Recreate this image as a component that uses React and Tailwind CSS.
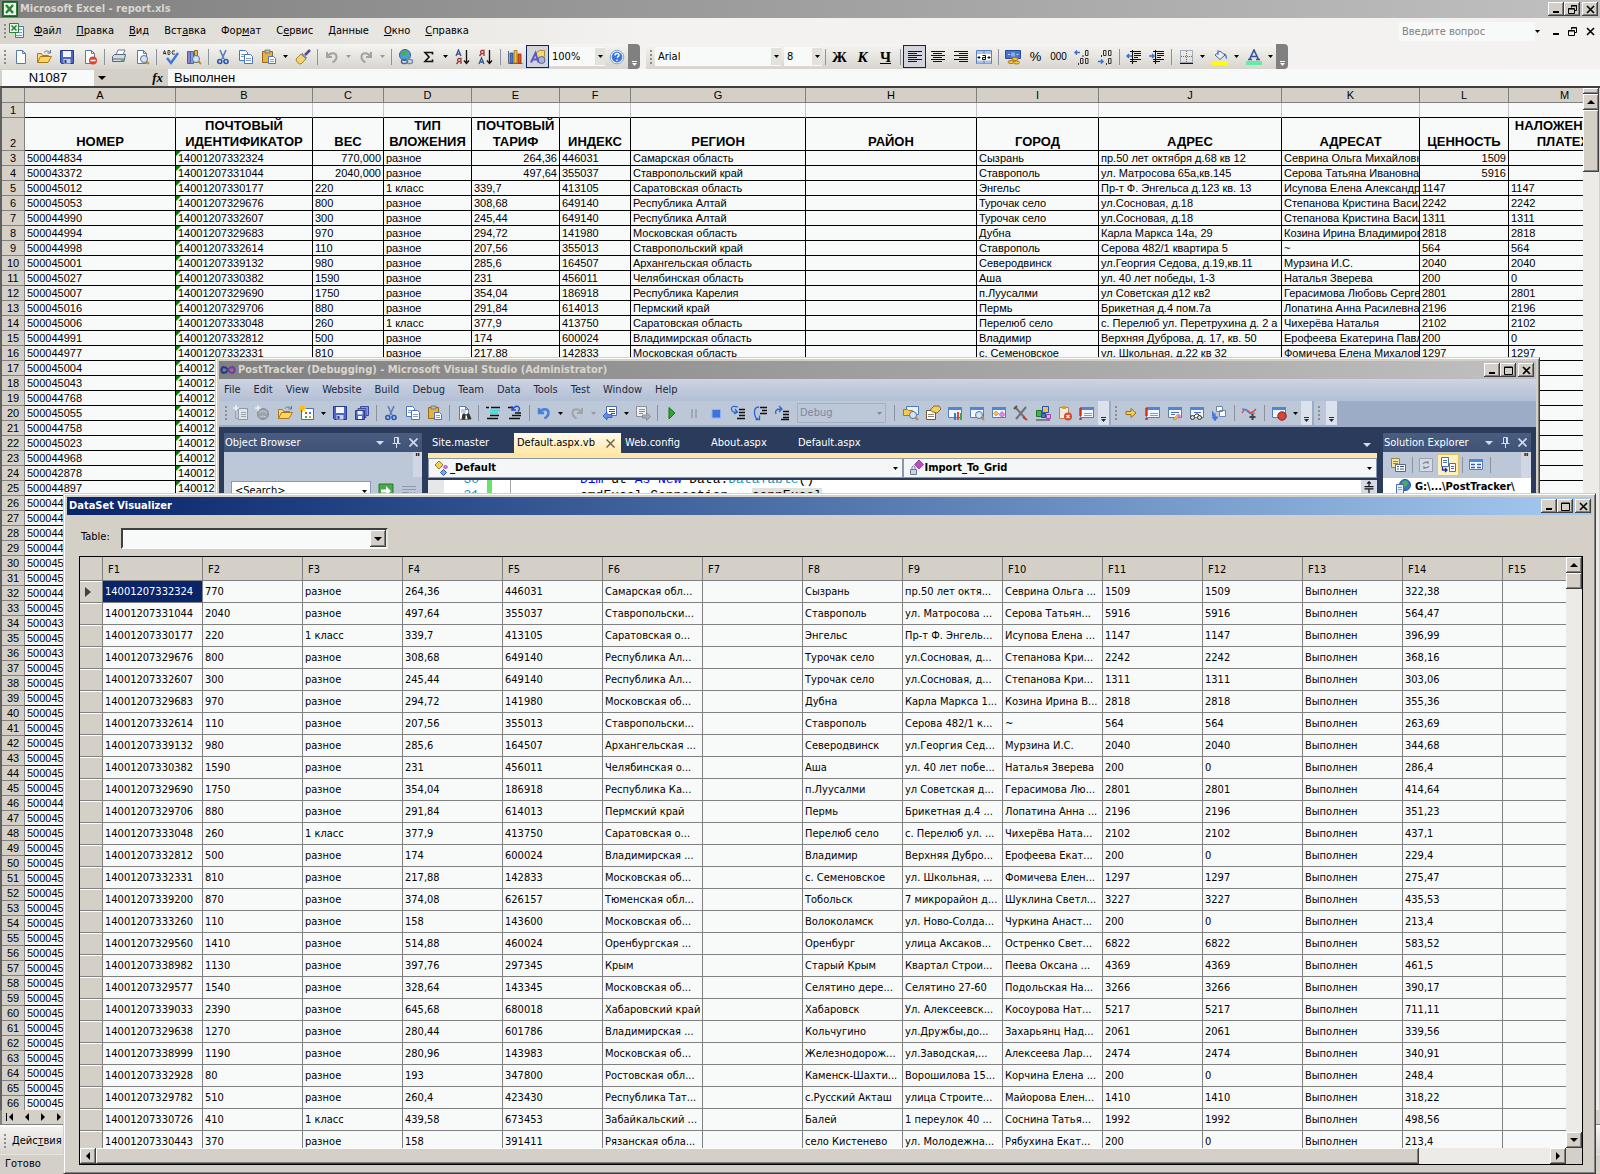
import React from 'react';

const raised =
  'bg-[#d4d0c8] shadow-[inset_-1px_-1px_0_#404040,inset_1px_1px_0_#ffffff,inset_-2px_-2px_0_#808080]';
const track = 'bg-[#ecebe8]';

/* ---------- icons ---------- */

const page = (
  <path d="M3.5 1.5h6l3 3v10h-9z M9.5 1.5v3h3" fill="#fff" stroke="#5a7aa8" />
);
const lens = (
  <>
    <path d="M12 12l3 3" stroke="#c88a2a" strokeWidth="2" />
    <circle cx="10" cy="10" r="3.5" fill="#cfe6fa" stroke="#5d7590" />
  </>
);
const win = (
  <>
    <path d="M1.5 2.5h13v10h-13z" fill="#f4f8ff" stroke="#5b7bb8" />
    <path d="M1 2h14v3H1z" fill="#4f86dc" />
  </>
);
const undoArrow = 'M3 3v5h5 M3.5 7.5C6 3.5 12 3 12.5 7.5C12.7 10 11 12 8.5 13.5';
const redoArrow = 'M13 3v5H8 M12.5 7.5C10 3.5 4 3 3.5 7.5C3.3 10 5 12 7.5 13.5';

const icons = {
  excel: (
    <>
      <path d="M.5.5h15v15H.5z" fill="#2f7d32" stroke="#1d5a22" />
      <path d="M2 2h12v12H2z" fill="#e9f6e7" />
      <path d="M4 4l7 8 M11 4l-7 8" stroke="#2c8136" strokeWidth="2.5" />
    </>
  ),
  book: (
    <>
      <path d="M6.5 3.5h8v11h-8z" fill="#eaf1fc" stroke="#4a73b6" />
      <path d="M9 6.5h4 M9 9.5h4 M7 12.5h6" stroke="#7596cd" />
      <path d="M.5.5h9v9h-9z" fill="#e9f6e7" stroke="#2c8136" />
      <path d="M2.5 2.5l5 5 M7.5 2.5l-5 5" stroke="#2c8136" strokeWidth="1.6" />
    </>
  ),
  new: page,
  open: (
    <>
      <path d="M1.5 13.5v-9h4l1 2h6v3" fill="#f7dc83" stroke="#a9781e" />
      <path d="M1.5 13.5l3-6h11l-3.5 6z" fill="#ffd65c" stroke="#a9781e" />
      <path d="M8 3.5c2-2 4-2 6 0 M14.5 1v3h-3" stroke="#56749f" />
    </>
  ),
  save: (
    <>
      <path d="M1.5 1.5h13v13h-12l-1-1z" fill="#4d66c8" stroke="#283a8e" />
      <path d="M4 2h8v6H4z" fill="#f3f6ff" />
      <path d="M4.5 10h7v4.5h-7z" fill="#c9d2ea" />
      <path d="M5.5 11h2v3h-2z" fill="#2d3f93" />
    </>
  ),
  saveAll: (
    <>
      <path d="M6.5 1.5h8v9h-8z" fill="#8b9be0" stroke="#3a4aa0" />
      <path d="M4 3.5h8v9H4z" fill="#8b9be0" stroke="#3a4aa0" />
      <path d="M1.5 5.5h9v9h-9z" fill="#5167c6" stroke="#2b3b8e" />
      <path d="M3.5 6h5v3.5h-5z M4 11h4v3H4z" fill="#f1f4ff" />
    </>
  ),
  permission: (
    <>
      {page}
      <circle cx="11" cy="11.5" r="4" fill="#e2452a" />
      <path d="M8.5 11.5h5" stroke="#fff" strokeWidth="1.6" />
    </>
  ),
  print: (
    <>
      <path d="M5 6l2-5h7l-2 5z" fill="#fff" stroke="#6a7c96" />
      <path d="M1.5 7.5l2-2h11l-1.5 7h-11.5z" fill="#d5dbe4" stroke="#5d6672" />
      <path d="M2 10h11" stroke="#5d6672" />
      <path d="M10 11h2.5v2H10z" fill="#29b53a" />
    </>
  ),
  preview: (
    <>
      {page}
      {lens}
    </>
  ),
  spell: (
    <>
      <path d="M0 5.5l1.5-4l1.5 4 M1 4.5h2 M5 1.5v4h1.5q1.5-1 0-2q1-1.2 0-2z M12 2q-3-1-3 1.5t3 1.5" stroke="#222" strokeWidth=".9" />
      <path d="M4 9l4 5l7-10" stroke="#3f76d8" strokeWidth="2.4" />
    </>
  ),
  research: (
    <>
      <path d="M1.5 2.5h3v12h-3z" fill="#9a7cc8" stroke="#65509a" />
      <path d="M4.5 2.5h3v12h-3z" fill="#7ea3e0" stroke="#4668a8" />
      <path d="M8.5 1.5h3v12h-3z" fill="#e6b566" stroke="#8e6a2a" />
      {lens}
    </>
  ),
  cut: (
    <>
      <path d="M5 1l4 9 M11 1l-4 9" stroke="#5b7fb8" strokeWidth="1.6" />
      <circle cx="4.8" cy="12.5" r="2" stroke="#2c54b4" strokeWidth="1.6" />
      <circle cx="11" cy="12.5" r="2" stroke="#2c54b4" strokeWidth="1.6" />
    </>
  ),
  copy: (
    <>
      <path d="M1.5 1.5h6l2 2v8h-8z" fill="#fff" stroke="#4c74bc" />
      <path d="M6.5 5.5h6l2 2v7h-8z" fill="#fff" stroke="#4c74bc" />
      <path d="M3 5.5h3 M3 7.5h3 M8 9.5h5 M8 11.5h5" stroke="#7a9bd8" />
    </>
  ),
  paste: (
    <>
      <path d="M1.5 2.5h10v11h-10z" fill="#e9b03e" stroke="#94691d" />
      <path d="M4 1h5v3H4z" fill="#b9b9b9" stroke="#6f6f6f" strokeWidth=".8" />
      <path d="M7.5 7.5h5l2 2v5h-7z" fill="#fff" stroke="#4c74bc" />
      <path d="M9 10.5h4 M9 12.5h4" stroke="#7a9bd8" />
    </>
  ),
  brush: (
    <>
      <path d="M15 1l-5 5" stroke="#5c4a8a" strokeWidth="2.5" />
      <path d="M6 5l5 5l-5 5q-4 0-5-5z" fill="#f2d375" stroke="#a8862f" />
      <path d="M6.5 4.5l5 5" stroke="#7d8cb8" strokeWidth="2" />
    </>
  ),
  undoGray: <path d={undoArrow} stroke="#a3a3a3" strokeWidth="2" />,
  redoGray: <path d={redoArrow} stroke="#a3a3a3" strokeWidth="2" />,
  undoBlue: <path d={undoArrow} stroke="#4a7fd8" strokeWidth="2.4" />,
  link: (
    <>
      <circle cx="7" cy="6" r="5.5" fill="#4f9be0" stroke="#2d61a0" />
      <path d="M3 4q3-4 6-2q1 3-2 4q-4 2-4-2z M9 8l3-1l-2 4z" fill="#46b04a" />
      <rect x="3.5" y="10.5" width="6" height="4" rx="2" stroke="#4a6591" strokeWidth="1.5" />
      <rect x="8.5" y="10.5" width="6" height="4" rx="2" stroke="#6f8cb8" strokeWidth="1.5" />
    </>
  ),
  sum: <path d="M11.5 5.5V3.500H4L8 8L4 12.500h7.500v-2" stroke="#111" strokeWidth="1.6" />,
  sortAz: (
    <>
      <path d="M1 7l2.5-6L6 7 M2 5h3" stroke="#34549c" strokeWidth="1.3" />
      <path d="M6 15V9.5H3.5q-2 1.5 0 3H6 M3.5 12.5L1.5 15" stroke="#a03838" strokeWidth="1.3" />
      <path d="M11.5 1v13 M9 11.5l2.5 3l2.5-3" stroke="#111" strokeWidth="1.3" />
    </>
  ),
  sortZa: (
    <>
      <path d="M6 7V1.5H3.5q-2 1.5 0 3H6 M3.5 4.5L1.5 7" stroke="#a03838" strokeWidth="1.3" />
      <path d="M1 15l2.5-6L6 15 M2 13h3" stroke="#34549c" strokeWidth="1.3" />
      <path d="M11.5 1v13 M9 11.5l2.5 3l2.5-3" stroke="#111" strokeWidth="1.3" />
    </>
  ),
  chart: (
    <>
      <path d="M1.5 2v12.5h14" stroke="#666" />
      <path d="M3 4h3v10H3z" fill="#4c78d0" stroke="#274a94" strokeWidth=".8" />
      <path d="M7 1.5h3V14H7z" fill="#f2c23c" stroke="#94701a" strokeWidth=".8" />
      <path d="M11 5h3v9h-3z" fill="#e0552c" stroke="#8d2c12" strokeWidth=".8" />
    </>
  ),
  drawing: (
    <>
      <path d="M6.5 3.5l3-2h5v6l-3 2h-5z" fill="#f5d978" stroke="#a98a30" />
      <circle cx="11.5" cy="11" r="3.5" fill="#a8b4d2" stroke="#56658c" />
      <path d="M1 13.5L5.5 4l3 9.5 M3 10.5h4.5" stroke="#5b5bc4" strokeWidth="2" />
    </>
  ),
  help: (
    <>
      <circle cx="8" cy="8" r="6.8" fill="#fff" stroke="#7da2dc" />
      <circle cx="8" cy="8" r="5.4" fill="#3b78da" />
      <path d="M6 6.5q0-2 2-2t2 1.8q0 1.2-2 2.2 M8 10.5v1.5" stroke="#fff" strokeWidth="1.4" />
    </>
  ),
  alignLeft: <path d="M1 2.5h14 M1 4.5h9 M1 6.5h14 M1 8.5h9 M1 10.5h14 M1 12.5h9" stroke="#111" />,
  alignCenter: <path d="M1 2.5h14 M3 4.5h9 M1 6.5h14 M3 8.5h9 M1 10.5h14 M3 12.5h9" stroke="#111" />,
  alignRight: <path d="M1 2.5h14 M6 4.5h9 M1 6.5h14 M6 8.5h9 M1 10.5h14 M6 12.5h9" stroke="#111" />,
  merge: (
    <>
      <path d="M.5 1.5h15v13H.5z" fill="#fff" stroke="#5d7fb8" />
      <path d="M1 2h14v3H1z M1 11.5h14v3H1z" fill="#a9c2ea" />
      <path d="M8 1.5v3 M8 11.5v3" stroke="#5d7fb8" />
      <path d="M1.5 8.5h3 M3 7v3 M11.5 8.5h3 M13 7v3 M6.5 6.5h3v4h-3v-2h3" stroke="#111" />
    </>
  ),
  currency: (
    <>
      <path d="M.5 1.5h15v8H.5z" fill="#4774cc" stroke="#2b4d96" />
      <path d="M3 5.5h2 M7 3.5v4 M9 3.5v4 M11.5 5.5h2" stroke="#cfe0ff" />
      <ellipse cx="10" cy="10" rx="3" ry="1.5" fill="#f7c93e" stroke="#a87a14" />
      <ellipse cx="6" cy="13" rx="3" ry="1.5" fill="#f7c93e" stroke="#a87a14" />
      <ellipse cx="11.5" cy="13.5" rx="3" ry="1.5" fill="#f7c93e" stroke="#a87a14" />
    </>
  ),
  incDec: (
    <>
      <path d="M6 3.5H1 M3 1.5l-2 2l2 2" stroke="#3a6fd8" strokeWidth="1.5" />
      <path d="M11.5 1.5h2.5v5h-2.5z M6.5 9.5h2.5v5H6.5z M11.5 9.5h2.5v5h-2.5z M9 6v2 M4.5 14v2" stroke="#333" />
    </>
  ),
  decDec: (
    <>
      <path d="M6.5 1.5h2.5v5H6.5z M11.5 1.5h2.5v5h-2.5z M11.5 9.5h2.5v5h-2.5z M4.5 6v2 M9.5 14v2" stroke="#333" />
      <path d="M1 12.5h5 M4 10.5l2 2l-2 2" stroke="#3a6fd8" strokeWidth="1.5" />
    </>
  ),
  outdent: (
    <>
      <path d="M4 2.5h11 M8 4.5h7 M8 6.5h7 M8 8.5h4 M4 10.5h11 M4 12.5h7 M6.5 1v14" stroke="#111" strokeWidth="1.1" />
      <path d="M6 7H1 M3 5L1 7l2 2" stroke="#3a6fd8" strokeWidth="1.5" />
    </>
  ),
  indent: (
    <>
      <path d="M4 2.5h11 M8 4.5h7 M8 6.5h7 M8 8.5h4 M4 10.5h11 M4 12.5h7 M6.5 1v14" stroke="#111" strokeWidth="1.1" />
      <path d="M0 7h5 M3 5l2 2l-2 2" stroke="#3a6fd8" strokeWidth="1.5" />
    </>
  ),
  border: (
    <>
      <path d="M2.5 1.5h12v12h-12z M8.5 2v11 M3 7.5h11" stroke="#5a6a90" strokeDasharray="1 1" />
      <path d="M2 14.5h13" stroke="#111" />
    </>
  ),
  fill: (
    <>
      <path d="M3 6l5-4l5 4l-5 4.5z" fill="#e8eef8" stroke="#4a6494" />
      <path d="M6 1v5" stroke="#4a6494" />
      <path d="M12 4q3 1 3 6q-2-1-2-4z" fill="#3a6fd0" />
      <path d="M0 12h16v4H0z" fill="#ffff00" />
    </>
  ),
  fontColor: (
    <>
      <path d="M3.5 10.5L8 1l4.5 9.5 M5 7.5h6 M2 10.5h4 M10 10.5h4" stroke="#34549c" strokeWidth="1.6" />
      <path d="M0 12h16v4H0z" fill="#5cf0a0" />
    </>
  ),
  infinity: (
    <>
      <path d="M8 8C6 4.5 1.5 4 1.5 8S6 11.5 8 8" stroke="#24398c" strokeWidth="2.2" />
      <path d="M8 8c2-3.5 6.5-4 6.5 0S10 11.5 8 8" stroke="#7a3aa8" strokeWidth="2.2" />
    </>
  ),
  grayWin: (
    <>
      <path d="M5.5 3.5h9v11h-9z" fill="#dfe3ea" stroke="#8f96a4" />
      <path d="M2.5 5.5h3v8h-3z M8 7.5h5 M8 9.5h5 M8 11.5h5" stroke="#9aa1ae" />
      <path d="M3 0v6 M0 3h6" stroke="#fff" />
    </>
  ),
  grayGlobe: (
    <>
      <circle cx="8" cy="9" r="5.5" fill="#9ea4ae" stroke="#868c98" />
      <path d="M4 8q4-4 8 0 M5 12q3-2 6 0" stroke="#c4c8d0" />
      <path d="M3 0v6 M0 3h6" stroke="#fff" />
    </>
  ),
  newItem: (
    <>
      <path d="M2.5 3.5h12v11h-12z" fill="#fff" stroke="#4c6cb0" />
      <path d="M6 7h2v2H6z" fill="#e0452c" />
      <path d="M10 7h2v2h-2z" fill="#3a78d8" />
      <path d="M6 11h2v2H6z" fill="#3aa848" />
      <path d="M10 11h2v2h-2z" fill="#d8a020" />
      <path d="M3.5 0v7 M0 3.5h7 M1 1l5 5 M6 1L1 6" stroke="#f2b81c" />
    </>
  ),
  find: (
    <>
      {page}
      <path d="M5 5h5 M5 7h5" stroke="#7a9bd8" />
      <path d="M7 9h2v5H6z M11 9h2l2 5h-3z M9 10h2" fill="#333" stroke="#333" />
    </>
  ),
  comment: (
    <>
      <path d="M1 2.5h3 M6 2.5h9 M5 10.5h9 M2 13.5h11" stroke="#111" strokeWidth="1.4" />
      <path d="M5 5.5h10 M5 8h8" stroke="#27dede" strokeWidth="1.4" />
    </>
  ),
  uncomment: (
    <>
      <path d="M1 2.5h5 M5 10.5h9 M2 13.5h11 M8 8h6" stroke="#111" strokeWidth="1.4" />
      <path d="M5 1v4h4 M5.5 4.5Q8 .5 11 1.500q3 2 0 5" stroke="#2a4ad0" strokeWidth="1.4" />
    </>
  ),
  navBack: (
    <>
      <path d="M4.5 1.5h10v9h-10z" fill="#fff" stroke="#4c6cb0" />
      <path d="M7 4.5h6 M7 6.5h6 M9 8.5h4" stroke="#2a50b0" />
      <path d="M1 11l4-4v2.5h5v3H5V15z" fill="#5a92e8" stroke="#2a58b0" strokeWidth=".8" />
    </>
  ),
  navFwd: (
    <>
      <path d="M1.5 1.5h10v10h-10z" fill="#eceef2" stroke="#8a8f9a" />
      <path d="M4 4.5h6 M4 6.5h6 M4 8.5h4" stroke="#8a8f9a" />
      <path d="M15.5 11.5l-4-4V10h-4v3h4v2.5z" fill="#a8adb8" stroke="#7f8590" strokeWidth=".8" />
    </>
  ),
  play: <path d="M5 2.5l6 5.5l-6 6z" fill="#2ea52e" stroke="#17701c" />,
  pause: <path d="M5 4h2v9H5z M9 4h2v9H9z" fill="#a2a8b4" />,
  stop: <path d="M4 4.5h8.5V13H4z" fill="#3b74dc" stroke="#8fb3f2" />,
  stepInto: (
    <>
      <path d="M9 4.5h6 M9 7.5h6 M9 10.5h6 M7 13.5h8" stroke="#111" strokeWidth="1.3" />
      <path d="M8 2Q1 0 1.5 4t5.5 3 M5 4l2.5 3L4 9" stroke="#2d62d4" strokeWidth="1.3" />
    </>
  ),
  stepOver: (
    <>
      <path d="M8 2.5h7 M10 5.5h5 M8 8.5h7" stroke="#111" strokeWidth="1.3" />
      <path d="M7 2Q2 2 2.5 8t4 6 M3.5 14.5h4v-4" stroke="#2d62d4" strokeWidth="1.3" />
    </>
  ),
  stepOut: (
    <>
      <path d="M9 6.5h6 M9 9.5h6 M9 12.5h6 M7 14.5h8" stroke="#111" strokeWidth="1.3" />
      <path d="M2 9Q0 4 7 4 M5 1l3 3l-3 3" stroke="#2d62d4" strokeWidth="1.3" />
    </>
  ),
  folderFind: (
    <>
      <path d="M3.5 1.5h12v8h-12z" fill="#e9f1ff" stroke="#4f79c4" />
      <path d="M.5 4.5h4l1 1h4v5h-9z" fill="#f7c94a" stroke="#a5781c" />
      {lens}
    </>
  ),
  properties: (
    <>
      <path d="M1.5 5.5h9v9h-9z" fill="#fff" stroke="#6c5a3a" />
      <path d="M3 9.5h6 M3 11.5h6" stroke="#8f836a" />
      <path d="M5 5l4-4h5l2 3l-4 4l-4-1z" fill="#f2cf62" stroke="#8e6a1a" />
    </>
  ),
  toolboxWin: (
    <>
      {win}
      <path d="M7 8h2v7H7z" fill="#3a78d8" />
      <path d="M10 7h2v8h-2z" fill="#e0452c" />
      <path d="M13 8h2v7h-2z" fill="#3aa848" />
    </>
  ),
  winFind: (
    <>
      {win}
      {lens}
    </>
  ),
  diamondWin: (
    <>
      {win}
      <path d="M5 6l2.5 2.5L5 11L2.5 8.5z" fill="#f5c838" stroke="#a8801c" strokeWidth=".6" />
      <path d="M11 6.5l3 3l-3 3l-3-3z" fill="#e08ae8" stroke="#9a3aa8" strokeWidth=".6" />
    </>
  ),
  tools: (
    <>
      <path d="M2 2l10 11" stroke="#8a6a5a" strokeWidth="2" />
      <path d="M13 2L3 14" stroke="#6a7080" strokeWidth="2" />
      <path d="M10 12l4 3" stroke="#c0392b" strokeWidth="2" />
      <path d="M1 4l3-3" stroke="#555" strokeWidth="2" />
    </>
  ),
  blocks: (
    <>
      <path d="M1.5 5.5h5v6h-5z" fill="#49b04c" stroke="#23702a" />
      <path d="M7.5 1.5h6v6h-6z" fill="#f2c43c" stroke="#2c52ac" />
      <path d="M6.5 8.5h4v4h-4z" fill="#3a78d8" stroke="#1f4a94" />
      <path d="M11.5 9.5h4v4h-4z" fill="#e9a6ee" stroke="#9a4aa6" />
      <path d="M1 15h14" stroke="#666" strokeWidth="1.5" />
    </>
  ),
  clipError: (
    <>
      <path d="M2.5 2.5h9v11h-9z" fill="#f3eada" stroke="#a88a5a" />
      <path d="M5 1h4v3H5z" fill="#c9a14a" />
      <circle cx="11" cy="11.5" r="4" fill="#e2452a" />
      <path d="M9.5 10l3 3 M12.5 10l-3 3" stroke="#fff" strokeWidth="1.2" />
    </>
  ),
  errorWin: (
    <>
      {win}
      <path d="M5 8.5h8 M5 10.5h8" stroke="#8a9ab8" />
      <path d="M1.5 3v8 M1.5 13v2" stroke="#dc2a1a" strokeWidth="2.4" />
    </>
  ),
  arrowRight: <path d="M3 6.500h5v-3l5 4.500l-5 4.500v-3H3z" fill="#f7cf52" stroke="#94701c" />,
  editWin: (
    <>
      {win}
      <path d="M4 7.5h8 M4 9.5h4" stroke="#4c6cb0" />
      <path d="M6 14l5-5l2 2l-5 4z" fill="#f5c838" stroke="#a8801c" strokeWidth=".6" />
      <path d="M12 9l2 2l-2 3l-2-2z" fill="#d872e4" />
    </>
  ),
  findWin: (
    <>
      {win}
      <path d="M5 7.5h7" stroke="#4c6cb0" />
      <circle cx="3.5" cy="12.5" r="2" fill="#ddd" stroke="#333" />
      <circle cx="10.5" cy="12.5" r="2" fill="#ddd" stroke="#333" />
      <path d="M5 11l2-2h2l2 2" stroke="#333" />
    </>
  ),
  cascade: (
    <>
      <path d="M5.5 1.5h6v5h-6z M8.5 5.5h6v6h-6z" fill="#fff" stroke="#6a82ac" />
      <path d="M1.5 6v5h3 M4 8v8 M1 12l3 3.5l3-3.5z" fill="#3f78d8" stroke="#3f78d8" />
    </>
  ),
  wave: (
    <>
      <path d="M1 8q3-6 6-2t8-2" stroke="#d8413a" strokeWidth="1.3" />
      <path d="M1 4q4 0 6 3t7 1" stroke="#5b86d6" strokeWidth="1.3" />
      <path d="M11.5 9v6 M8.5 12h6" stroke="#444" strokeWidth="2" />
    </>
  ),
  breakpoint: (
    <>
      {win}
      <circle cx="11" cy="11" r="4.2" fill="#d4473a" stroke="#8e1f18" />
    </>
  ),
  classes: (
    <>
      <path d="M6 1l4 4l-4 4l-4-4z" fill="#f7cf52" stroke="#a5781c" />
      <path d="M12.5 5l2 2l-2 2l-2-2z" fill="#e58aea" stroke="#9a3aa8" />
      <path d="M10.5 9.5l3 3l-3 3l-3-3z" fill="#7fa8ea" stroke="#2c52ac" />
    </>
  ),
  method: (
    <>
      <path d="M11 0l4.5 4.5L11 9L6.5 4.5z" fill="#c04ac8" stroke="#8a2a94" strokeWidth=".8" />
      <path d="M2.5 9.5h6v5h-6z" fill="#c9d3e4" stroke="#67789a" />
      <path d="M4 9V7q1.5-2 3 0v2" stroke="#67789a" />
    </>
  ),
  go: (
    <>
      <path d="M1 1h14v14H1z" fill="#48a84a" stroke="#2c7a30" />
      <path d="M3 6.5h5V3l5 5l-5 5V9.5H3z" fill="#fff" />
    </>
  ),
  listGray: <path d="M1 3.5h14 M1 6.5h14 M1 9.5h7 M1 12.5h7 M10 9l4 4 M14 9l-4 4" stroke="#9098a8" />,
  folders: (
    <>
      <path d="M1.5 1.5h8v9h-8z" fill="#f4e6a8" stroke="#9a8240" />
      <path d="M3 4.5h5 M3 6.5h5" stroke="#8d8360" />
      <path d="M5.5 7.5h10v7h-10z" fill="#fff" stroke="#5a6684" />
      <path d="M7 9.5h2 M10 9.5h4 M7 12h2 M10 12h4" stroke="#3a4f80" />
    </>
  ),
  refresh: (
    <>
      <path d="M1.5 1.5h13v13h-13z" fill="#d6dae2" stroke="#9aa0ac" />
      <path d="M5 7q2-3 5-1V4 M11 9q-2 3-5 1v2" stroke="#7f8694" strokeWidth="1.3" />
    </>
  ),
  nest: (
    <>
      <path d="M1.5.5h7v9h-7z M9.5 6.5h6v8h-6z" fill="#fff" stroke="#4c6cb0" />
      <path d="M3 3.5h4 M3 5.5h4 M11 9.5h3 M11 11.5h3" stroke="#4c6cb0" />
      <path d="M2.5 10v3h4 M5 11l2 2l-2 2" stroke="#1a2a9a" strokeWidth="1.3" />
    </>
  ),
  form: (
    <>
      {win}
      <path d="M3 7.5h4 M9 7.5h4 M3 10.5h4 M9 10.5h4" stroke="#3a62b0" strokeWidth="1.4" />
    </>
  ),
  siteGlobe: (
    <>
      <circle cx="10" cy="6" r="5.5" fill="#3a78c8" stroke="#23508c" />
      <path d="M7 3q3-3 6 0q0 4-4 5z" fill="#48b04c" />
      <path d="M1.5 5.5h7v9h-7z" fill="#e6eefc" stroke="#4c6cb0" />
      <path d="M3 8.5h4 M3 10.5h4" stroke="#7a9bd8" />
    </>
  ),
};

const Icon = ({ name }) => (
  <svg viewBox="0 0 16 16" className="h-4 w-4 shrink-0" fill="none" aria-hidden="true">
    {icons[name]}
  </svg>
);

const Caret = ({ className = 'fill-black' }) => (
  <svg viewBox="0 0 5 3" className={`h-[3px] w-[5px] shrink-0 ${className}`} aria-hidden="true">
    <path d="M0 0h5L2.5 3z" />
  </svg>
);

const Triangle = ({ dir }) => {
  const paths = { up: 'M0 6l4-4l4 4z', down: 'M0 2l4 4l4-4z', left: 'M6 0L2 4l4 4z', right: 'M2 0l4 4l-4 4z' };
  return (
    <svg viewBox="0 0 8 8" className="h-2 w-2 shrink-0 fill-black" aria-hidden="true">
      <path d={paths[dir]} />
    </svg>
  );
};

/* ---------- shared window parts ---------- */

const glyphs = {
  Minimize: <path d="M1 7h6" strokeWidth="2" />,
  Maximize: <path d="M.5 1h8v7.5h-8z M.5 1.5h8" />,
  Restore: <path d="M3.5 2.5v-2h5v5h-2 M3 1h6 M.5 3.5h6v5h-6z M.5 4h6" />,
  Close: <path d="M1 1l7 7 M8 1L1 8" strokeWidth="1.6" />,
};

const CaptionButton = ({ label, flat }) => (
  <button
    type="button"
    aria-label={label}
    className={`flex h-[14px] w-4 items-center justify-center ${flat ? '' : raised}`}
  >
    <svg viewBox="0 0 9 9" className="h-[9px] w-[9px]" fill="none" stroke="#000" aria-hidden="true">
      {glyphs[label]}
    </svg>
  </button>
);

const ScrollButton = ({ dir }) => (
  <button type="button" aria-label={`Scroll ${dir}`} className={`flex h-4 w-4 shrink-0 items-center justify-center ${raised}`}>
    <Triangle dir={dir} />
  </button>
);

/* Toolbar rows are lists of icon names plus: '|' separator, 'v' drop arrow */
const ToolItems = ({ items, size, sep }) =>
  items.map((item, i) => {
    if (item === '|') {
      return (
        <span key={i} className={`flex shrink-0 justify-center ${sep}`}>
          <span className="h-4 w-px bg-[#8d92a0]" />
        </span>
      );
    }
    if (item === 'v' || item === 'V') {
      return (
        <button key={i} type="button" aria-label="More" className="flex w-[11px] shrink-0 items-center justify-center">
          <Caret className={item === 'V' ? 'fill-[#999999]' : 'fill-black'} />
        </button>
      );
    }
    const pressed = item.startsWith('*');
    const name = pressed ? item.slice(1) : item;
    return (
      <button
        key={i}
        type="button"
        aria-label={name}
        className={`flex shrink-0 items-center justify-center ${size} ${pressed ? 'border border-[#0a246a] bg-[#d3d5de]' : ''}`}
      >
        <Icon name={name} />
      </button>
    );
  });

const Grip = () => (
  <span className="flex w-[9px] shrink-0 flex-col items-center gap-[2px]">
    {[0, 1, 2, 3].map((n) => (
      <span key={n} className="h-[2px] w-[2px] bg-[#8c8c8c]" />
    ))}
  </span>
);

const ToolCombo = ({ label, value, className }) => (
  <span className={`flex h-[19px] shrink-0 items-center bg-[#f8fafa] ${className}`}>
    <select aria-label={label} className="h-full min-w-0 flex-1 appearance-none bg-transparent pl-[3px] outline-none">
      <option>{value}</option>
    </select>
    <span className="flex h-[17px] w-[10px] items-center justify-center bg-[#e4e2dd]">
      <Caret />
    </span>
  </span>
);

const Overflow = ({ className }) => (
  <button type="button" aria-label="Toolbar options" className={`flex shrink-0 flex-col items-center justify-end gap-px pb-[3px] ${className}`}>
    <span className="h-px w-[5px] bg-current" />
    <Caret className="fill-current" />
  </button>
);

/* ---------- data ---------- */

const sheetColumns = [
  ['A', 'w-[151px]', 'НОМЕР'],
  ['B', 'w-[137px]', 'ПОЧТОВЫЙ ИДЕНТИФИКАТОР'],
  ['C', 'w-[71px]', 'ВЕС'],
  ['D', 'w-[88px]', 'ТИП ВЛОЖЕНИЯ'],
  ['E', 'w-[88px]', 'ПОЧТОВЫЙ ТАРИФ'],
  ['F', 'w-[71px]', 'ИНДЕКС'],
  ['G', 'w-[175px]', 'РЕГИОН'],
  ['H', 'w-[171px]', 'РАЙОН'],
  ['I', 'w-[122px]', 'ГОРОД'],
  ['J', 'w-[183px]', 'АДРЕС'],
  ['K', 'w-[138px]', 'АДРЕСАТ'],
  ['L', 'w-[89px]', 'ЦЕННОСТЬ'],
  ['M', 'w-[112px]', 'НАЛОЖЕННЫЙ ПЛАТЕЖ'],
];

const sheetRows = [
  ['500044834', '14001207332324', '770,000', 'разное', '264,36', '446031', 'Самарская область', '', 'Сызрань', 'пр.50 лет октября д.68 кв 12', 'Севрина Ольга Михайловна', '1509', ''],
  ['500043372', '14001207331044', '2040,000', 'разное', '497,64', '355037', 'Ставропольский край', '', 'Ставрополь', 'ул. Матросова 65а,кв.145', 'Серова Татьяна Ивановна', '5916', ''],
  ['500045012', '14001207330177', '220', '1 класс', '339,7', '413105', 'Саратовская область', '', 'Энгельс', 'Пр-т Ф. Энгельса д.123 кв. 13', 'Исупова Елена Александровна', '1147', '1147'],
  ['500045053', '14001207329676', '800', 'разное', '308,68', '649140', 'Республика Алтай', '', 'Турочак село', 'ул.Сосновая, д.18', 'Степанова Кристина Васильевна', '2242', '2242'],
  ['500044990', '14001207332607', '300', 'разное', '245,44', '649140', 'Республика Алтай', '', 'Турочак село', 'ул.Сосновая, д.18', 'Степанова Кристина Васильевна', '1311', '1311'],
  ['500044994', '14001207329683', '970', 'разное', '294,72', '141980', 'Московская область', '', 'Дубна', 'Карла Маркса 14а, 29', 'Козина Ирина Владимировна', '2818', '2818'],
  ['500044998', '14001207332614', '110', 'разное', '207,56', '355013', 'Ставропольский край', '', 'Ставрополь', 'Серова 482/1 квартира 5', '~', '564', '564'],
  ['500045001', '14001207339132', '980', 'разное', '285,6', '164507', 'Архангельская область', '', 'Северодвинск', 'ул.Георгия Седова, д.19,кв.11', 'Мурзина И.С.', '2040', '2040'],
  ['500045027', '14001207330382', '1590', 'разное', '231', '456011', 'Челябинская область', '', 'Аша', 'ул. 40 лет победы, 1-3', 'Наталья Зверева', '200', '0'],
  ['500045007', '14001207329690', '1750', 'разное', '354,04', '186918', 'Республика Карелия', '', 'п.Луусалми', 'ул Советская д12 кв2', 'Герасимова Любовь Сергеевна', '2801', '2801'],
  ['500045016', '14001207329706', '880', 'разное', '291,84', '614013', 'Пермский край', '', 'Пермь', 'Брикетная д.4 пом.7а', 'Лопатина Анна Расилевна', '2196', '2196'],
  ['500045006', '14001207333048', '260', '1 класс', '377,9', '413750', 'Саратовская область', '', 'Перелюб село', 'с. Перелюб ул. Перетрухина д. 2 а кв', 'Чихерёва Наталья', '2102', '2102'],
  ['500044991', '14001207332812', '500', 'разное', '174', '600024', 'Владимирская область', '', 'Владимир', 'Верхняя Дуброва, д. 17, кв. 50', 'Ерофеева Екатерина Павловна', '200', '0'],
  ['500044977', '14001207332331', '810', 'разное', '217,88', '142833', 'Московская область', '', 'с. Семеновское', 'ул. Школьная, д.22 кв 32', 'Фомичева Елена Михаловна', '1297', '1297'],
  ['500045004', '14001207339200'],
  ['500045043', '14001207333260'],
  ['500044768', '14001207329560'],
  ['500045055', '14001207338982'],
  ['500044758', '14001207329577'],
  ['500045023', '14001207339033'],
  ['500044968', '14001207329638'],
  ['500042878', '14001207338999'],
  ['500044897', '14001207332928'],
];

// Rows 26-66 sit under the visualizer, only the start of the number shows
const shortNumbers = { 26: '500044', 27: '500044', 28: '500044', 29: '500044', 32: '500044', 34: '500043', 36: '500043', 46: '500044' };
for (let n = 26; n <= 66; n += 1) {
  sheetRows.push([shortNumbers[n] || '500045']);
}

const gridColumns = Array.from({ length: 15 }, (_, i) => `F${i + 1}`);

const gridRows = [
  ['14001207332324', '770', 'разное', '264,36', '446031', 'Самарская обл...', '', 'Сызрань', 'пр.50 лет октя...', 'Севрина Ольга ...', '1509', '1509', 'Выполнен', '322,38'],
  ['14001207331044', '2040', 'разное', '497,64', '355037', 'Ставропольски...', '', 'Ставрополь', 'ул. Матросова ...', 'Серова Татьян...', '5916', '5916', 'Выполнен', '564,47'],
  ['14001207330177', '220', '1 класс', '339,7', '413105', 'Саратовская о...', '', 'Энгельс', 'Пр-т Ф. Энгель...', 'Исупова Елена ...', '1147', '1147', 'Выполнен', '396,99'],
  ['14001207329676', '800', 'разное', '308,68', '649140', 'Республика Ал...', '', 'Турочак село', 'ул.Сосновая, д...', 'Степанова Кри...', '2242', '2242', 'Выполнен', '368,16'],
  ['14001207332607', '300', 'разное', '245,44', '649140', 'Республика Ал...', '', 'Турочак село', 'ул.Сосновая, д...', 'Степанова Кри...', '1311', '1311', 'Выполнен', '303,06'],
  ['14001207329683', '970', 'разное', '294,72', '141980', 'Московская об...', '', 'Дубна', 'Карла Маркса 1...', 'Козина Ирина В...', '2818', '2818', 'Выполнен', '355,36'],
  ['14001207332614', '110', 'разное', '207,56', '355013', 'Ставропольски...', '', 'Ставрополь', 'Серова 482/1 к...', '~', '564', '564', 'Выполнен', '263,69'],
  ['14001207339132', '980', 'разное', '285,6', '164507', 'Архангельская ...', '', 'Северодвинск', 'ул.Георгия Сед...', 'Мурзина И.С.', '2040', '2040', 'Выполнен', '344,68'],
  ['14001207330382', '1590', 'разное', '231', '456011', 'Челябинская о...', '', 'Аша', 'ул. 40 лет побе...', 'Наталья Зверева', '200', '0', 'Выполнен', '286,4'],
  ['14001207329690', '1750', 'разное', '354,04', '186918', 'Республика Ка...', '', 'п.Луусалми', 'ул Советская д...', 'Герасимова Лю...', '2801', '2801', 'Выполнен', '414,64'],
  ['14001207329706', '880', 'разное', '291,84', '614013', 'Пермский край', '', 'Пермь', 'Брикетная д.4 ...', 'Лопатина Анна ...', '2196', '2196', 'Выполнен', '351,23'],
  ['14001207333048', '260', '1 класс', '377,9', '413750', 'Саратовская о...', '', 'Перелюб село', 'с. Перелюб ул. ...', 'Чихерёва Ната...', '2102', '2102', 'Выполнен', '437,1'],
  ['14001207332812', '500', 'разное', '174', '600024', 'Владимирская ...', '', 'Владимир', 'Верхняя Дубро...', 'Ерофеева Екат...', '200', '0', 'Выполнен', '229,4'],
  ['14001207332331', '810', 'разное', '217,88', '142833', 'Московская об...', '', 'с. Семеновское', 'ул. Школьная, ...', 'Фомичева Елен...', '1297', '1297', 'Выполнен', '275,47'],
  ['14001207339200', '870', 'разное', '374,08', '626157', 'Тюменская обл...', '', 'Тобольск', '7 микрорайон д...', 'Шуклина Светл...', '3227', '3227', 'Выполнен', '435,53'],
  ['14001207333260', '110', 'разное', '158', '143600', 'Московская об...', '', 'Волоколамск', 'ул. Ново-Солда...', 'Чуркина Анаст...', '200', '0', 'Выполнен', '213,4'],
  ['14001207329560', '1410', 'разное', '514,88', '460024', 'Оренбургская ...', '', 'Оренбург', 'улица Аксаков...', 'Остренко Свет...', '6822', '6822', 'Выполнен', '583,52'],
  ['14001207338982', '1130', 'разное', '397,76', '297345', 'Крым', '', 'Старый Крым', 'Квартал Строи...', 'Пеева Оксана ...', '4369', '4369', 'Выполнен', '461,5'],
  ['14001207329577', '1540', 'разное', '328,64', '143345', 'Московская об...', '', 'Селятино дере...', 'Селятино 27-60', 'Подольская На...', '3266', '3266', 'Выполнен', '390,17'],
  ['14001207339033', '2390', 'разное', '645,68', '680018', 'Хабаровский край', '', 'Хабаровск', 'Ул. Алексеевск...', 'Косоурова Нат...', '5217', '5217', 'Выполнен', '711,11'],
  ['14001207329638', '1270', 'разное', '280,44', '601786', 'Владимирская ...', '', 'Кольчугино', 'ул.Дружбы,до...', 'Захарьянц Над...', '2061', '2061', 'Выполнен', '339,56'],
  ['14001207338999', '1190', 'разное', '280,96', '143983', 'Московская об...', '', 'Железнодорож...', 'ул.Заводская,...', 'Алексеева Лар...', '2474', '2474', 'Выполнен', '340,91'],
  ['14001207332928', '80', 'разное', '193', '347800', 'Ростовская обл...', '', 'Каменск-Шахти...', 'Ворошилова 15...', 'Корчина Елена ...', '200', '0', 'Выполнен', '248,4'],
  ['14001207329782', '510', 'разное', '260,4', '423430', 'Республика Тат...', '', 'с.Русский Акташ', 'улица Строите...', 'Майорова Елен...', '1410', '1410', 'Выполнен', '318,22'],
  ['14001207330726', '410', '1 класс', '439,58', '673453', 'Забайкальский ...', '', 'Балей', '1 переулок 40 ...', 'Соснина Татья...', '1992', '1992', 'Выполнен', '498,56'],
  ['14001207330443', '370', 'разное', '158', '391411', 'Рязанская обла...', '', 'село Кистенево', 'ул. Молодежна...', 'Рябухина Екат...', '200', '0', 'Выполнен', '213,4'],
];

/* ---------- Excel ---------- */

// [before, underlined letter, after]
const excelMenu = [
  ['', 'Ф', 'айл'],
  ['', 'П', 'равка'],
  ['', 'В', 'ид'],
  ['Вст', 'а', 'вка'],
  ['Фор', 'м', 'ат'],
  ['С', 'е', 'рвис'],
  ['', 'Д', 'анные'],
  ['', 'О', 'кно'],
  ['', 'С', 'правка'],
];

const ExcelToolbar = () => (
  <div className="flex h-[25px] shrink-0 items-stretch bg-[#f3f2f0]">
    <div className="flex items-center bg-gradient-to-b from-[#f6f5f2] to-[#d8d5ce]">
      <Grip />
      <ToolItems
        size="h-[23px] w-[23px]"
        sep="w-[6px]"
        items={['new', 'open', 'save', 'permission', '|', 'print', 'preview', '|', 'spell', 'research', '|', 'cut', 'copy', 'paste', 'v', 'brush', '|', 'undoGray', 'V', 'redoGray', 'V', '|', 'link', 'sum', 'v', 'sortAz', 'sortZa', '|', 'chart', '*drawing']}
      />
      <ToolCombo label="Zoom" value="100%" className="w-[56px]" />
      <ToolItems size="h-[23px] w-[23px]" sep="w-[6px]" items={['help']} />
    </div>
    <Overflow className="w-3 rounded-r-sm bg-[#808080] text-white" />
    <div className="ml-[6px] flex items-center bg-gradient-to-b from-[#f6f5f2] to-[#d8d5ce]">
      <Grip />
      <ToolCombo label="Font" value="Arial" className="mr-[3px] w-[126px]" />
      <ToolCombo label="Font size" value="8" className="w-[38px]" />
      <ToolItems size="" sep="w-[6px]" items={['|']} />
      {[['Ж', 'font-bold'], ['К', 'font-bold italic'], ['Ч', 'font-bold underline']].map(([letter, style]) => (
        <button key={letter} type="button" className={`w-[23px] shrink-0 font-['Liberation_Serif',serif] text-[15px] ${style}`}>
          {letter}
        </button>
      ))}
      <ToolItems size="h-[23px] w-[23px]" sep="w-[6px]" items={['|', '*alignLeft', 'alignCenter', 'alignRight', 'merge', '|', 'currency']} />
      <button type="button" className="w-[23px] shrink-0 font-['Liberation_Sans',sans-serif] text-[13px]">%</button>
      <button type="button" className="w-[23px] shrink-0 font-['Liberation_Sans',sans-serif] text-[10px]">000</button>
      <ToolItems
        size="h-[23px] w-[23px]"
        sep="w-[6px]"
        items={['incDec', 'decDec', '|', 'outdent', 'indent', '|', 'border', 'v', 'fill', 'v', 'fontColor', 'v']}
      />
    </div>
    <Overflow className="w-3 rounded-r-sm bg-[#808080] text-white" />
  </div>
);

const Sheet = () => (
  <div className="min-h-0 min-w-0 flex-1 overflow-hidden bg-[#f8fafa]">
    <table className="w-[1619px] table-fixed border-separate border-spacing-0 font-['Liberation_Sans',sans-serif] text-[11px] leading-[14px]">
      <thead>
        <tr className="h-[15px] bg-[#d4d0c8]">
          <th className="w-[23px] border-r border-b border-[#808080] p-0" />
          {sheetColumns.map(([letter, width]) => (
            <th key={letter} scope="col" className={`border-r border-b border-[#808080] p-0 font-normal ${width}`}>
              {letter}
            </th>
          ))}
        </tr>
      </thead>
      <tbody>
        <tr className="h-[15px]">
          <th scope="row" className="border-r border-b border-[#808080] bg-[#d4d0c8] p-0 font-normal">1</th>
          {sheetColumns.map(([letter]) => (
            <td key={letter} className="border-r border-b border-r-[#c6c4c8] border-b-black p-0" />
          ))}
        </tr>
        <tr className="h-[33px] align-bottom">
          <th scope="row" className="border-r border-b border-[#808080] bg-[#d4d0c8] p-0 font-normal">2</th>
          {sheetColumns.map(([letter, , title]) => (
            <td key={letter} className="overflow-hidden border-r border-b border-black p-0 text-center text-[13px] leading-4 font-bold">
              {title}
            </td>
          ))}
        </tr>
        {sheetRows.map((row, r) => (
          <tr key={r} className="h-[15px]">
            <th scope="row" className="border-r border-b border-[#808080] bg-[#d4d0c8] p-0 font-normal">{r + 3}</th>
            {sheetColumns.map(([letter], c) => {
              const numeric = r < 2 && (letter === 'C' || letter === 'E' || letter === 'L');
              return (
                <td
                  key={letter}
                  className={`relative overflow-hidden border-r border-b border-black p-0 px-[2px] whitespace-nowrap ${numeric ? 'text-right' : ''}`}
                >
                  {letter === 'B' && row[c] && (
                    <svg viewBox="0 0 5 5" className="absolute top-0 left-0 h-[5px] w-[5px] fill-[#008000]" aria-hidden="true">
                      <path d="M0 0h5L0 5z" />
                    </svg>
                  )}
                  {row[c]}
                </td>
              );
            })}
          </tr>
        ))}
      </tbody>
    </table>
  </div>
);

const Excel = () => (
  <div className="flex h-screen flex-col bg-[#d4d0c8]">
    <header className="flex h-[18px] shrink-0 items-center justify-between bg-gradient-to-r from-[#808080] to-[#c0c0c0] pr-[2px] pl-[2px]">
      <h1 className="flex items-center gap-[2px] font-bold text-[#dad6ce]">
        <Icon name="excel" />
        Microsoft Excel - report.xls
      </h1>
      <div className="flex">
        <CaptionButton label="Minimize" />
        <CaptionButton label="Restore" />
        <span className="w-[2px]" />
        <CaptionButton label="Close" />
      </div>
    </header>

    <div className="flex h-[26px] shrink-0 items-center justify-between bg-gradient-to-r from-[#d8d5ce] via-[#f3f2f0] via-40% to-[#f3f2f0] pr-[2px]">
      <nav className="flex items-center">
        <Grip />
        <Icon name="book" />
        <div className="ml-[9px] flex gap-[15px]">
          {excelMenu.map(([before, letter, after]) => (
            <button key={before + letter + after} type="button">
              {before}
              <u>{letter}</u>
              {after}
            </button>
          ))}
        </div>
      </nav>
      <div className="flex items-center">
        <input aria-label="Введите вопрос" placeholder="Введите вопрос" className="h-[19px] w-[136px] bg-[#f8fafa] px-[3px] outline-none placeholder:text-[#808080]" />
        <Caret />
        <span className="w-2" />
        <CaptionButton label="Minimize" flat />
        <CaptionButton label="Restore" flat />
        <span className="w-[2px]" />
        <CaptionButton label="Close" flat />
      </div>
    </div>

    <ExcelToolbar />

    <div className="flex h-[17px] shrink-0 items-center pl-[2px] font-['Liberation_Sans',sans-serif] text-[13px]">
      <input aria-label="Name box" defaultValue="N1087" className="mr-1 h-4 w-[92px] shrink-0 bg-[#f8fafa] text-center outline-none" />
      <Triangle dir="down" />
      <label htmlFor="formula" className="w-[62px] shrink-0 pr-[5px] text-right font-['Liberation_Serif',serif] font-bold italic">
        fx
      </label>
      <input id="formula" defaultValue="Выполнен" className="h-full min-w-0 flex-1 bg-[#f8fafa] pl-[6px] outline-none" />
    </div>

    <div className="flex min-h-0 flex-1 border-t-2 border-l-2 border-t-[#404040] border-l-[#606060]">
      <Sheet />
      <div className={`flex w-4 shrink-0 flex-col ${track}`}>
        <div className={`h-[6px] shrink-0 ${raised}`} />
        <ScrollButton dir="up" />
        <div className={`h-[62px] shrink-0 ${raised}`} />
      </div>
      <div className="w-px bg-[#d4d0c8]" />
    </div>

    <div className="flex h-[15px] shrink-0 items-center gap-2 border-b border-l-2 border-[#808080] pl-1">
      {['left', 'left', 'right', 'right'].map((dir, i) => (
        <button key={i} type="button" aria-label="Sheet" className="flex items-center">
          {i === 0 && <span className="h-2 w-px bg-black" />}
          <Triangle dir={dir} />
          {i === 3 && <span className="h-2 w-px bg-black" />}
        </button>
      ))}
    </div>
    <div className="flex h-[29px] shrink-0 items-center border-t-2 border-white bg-gradient-to-b from-[#f3f2f0] to-[#d8d5ce]">
      <Grip />
      <button type="button" className="ml-[3px]">
        Дейс<u>т</u>вия
      </button>
    </div>
    <footer className="h-5 shrink-0 border-t border-[#e6e4df] pl-[5px] leading-[18px]">Готово</footer>
  </div>
);

/* ---------- Visual Studio ---------- */

const PanelHeader = ({ title }) => (
  <div className="flex h-[19px] shrink-0 items-center justify-between bg-gradient-to-b from-[#4a5d80] to-[#3d5277] pr-1 pl-px text-white">
    <h3>{title}</h3>
    <span className="flex items-center gap-2">
      <svg viewBox="0 0 8 4" className="h-1 w-2 fill-[#d5dbe8]" aria-hidden="true">
        <path d="M0 0h8L4 4z" />
      </svg>
      <svg viewBox="0 0 9 11" className="h-[11px] w-[9px]" fill="none" stroke="#d5dbe8" aria-hidden="true">
        <path d="M2.5.5h4v6h-4z M5.5 1v5 M.5 6.5h8 M4.5 7v4" />
      </svg>
      <svg viewBox="0 0 9 9" className="h-[9px] w-[9px]" fill="none" stroke="#d5dbe8" strokeWidth="1.6" aria-hidden="true">
        <path d="M.5.5l8 8 M8.5.5l-8 8" />
      </svg>
    </span>
  </div>
);

const vsMenu = ['File', 'Edit', 'View', 'Website', 'Build', 'Debug', 'Team', 'Data', 'Tools', 'Test', 'Window', 'Help'];

const MemberSelect = ({ icon, value }) => (
  <label className="flex min-w-0 flex-1 items-center gap-px border border-[#8a97b0] bg-[#f5f7f7] pr-1 pl-1">
    <Icon name={icon} />
    <select aria-label={value} className="min-w-0 flex-1 appearance-none bg-transparent font-bold outline-none">
      <option>{value}</option>
    </select>
    <Caret />
  </label>
);

const VisualStudio = () => (
  <section className="absolute top-[357px] right-[60px] left-[215px] flex h-[300px] flex-col overflow-hidden border border-[#404040] border-t-[#d4d0c8] border-l-[#d4d0c8] bg-[#d4d0c8] p-[3px] shadow-[inset_1px_1px_0_#ffffff,inset_-1px_-1px_0_#808080]">
    <header className="flex h-[18px] shrink-0 items-center justify-between bg-gradient-to-r from-[#808080] to-[#c0c0c0] pr-[2px] pl-px">
      <h2 className="flex items-center gap-[2px] font-bold text-[#dad6ce]">
        <Icon name="infinity" />
        PostTracker (Debugging) - Microsoft Visual Studio (Administrator)
      </h2>
      <div className="flex">
        <CaptionButton label="Minimize" />
        <CaptionButton label="Maximize" />
        <span className="w-[2px]" />
        <CaptionButton label="Close" />
      </div>
    </header>

    <nav className="flex h-[22px] shrink-0 items-center gap-[13px] bg-gradient-to-b from-[#cdd4e2] to-[#b3bfd5] pl-[5px] text-[#1b293e]">
      {vsMenu.map((item) => (
        <button key={item} type="button">{item}</button>
      ))}
    </nav>

    <div className="flex h-[26px] shrink-0 items-stretch bg-[#9cabc6] pb-[2px]">
      <div className="flex items-center bg-[#bcc7d8] pl-[2px]">
        <Grip />
        <ToolItems
          size="h-[22px] w-[22px]"
          sep="w-[7px]"
          items={['grayWin', 'grayGlobe', 'open', 'newItem', 'v', 'save', 'saveAll', '|', 'cut', 'copy', 'paste', '|', 'find', '|', 'comment', 'uncomment', '|', 'undoBlue', 'v', 'redoGray', 'V']}
        />
        <ToolItems
          size="h-[22px] w-[22px]"
          sep="w-[7px]"
          items={['navBack', 'v', 'navFwd', '|', 'play', 'pause', 'stop', 'stepInto', 'stepOver', 'stepOut']}
        />
        <span className="mr-[2px] ml-1 flex h-5 w-[89px] shrink-0 items-center border border-[#a4afc4] pr-[3px] text-[#8087a0]">
          <select disabled aria-label="Solution configuration" className="min-w-0 flex-1 appearance-none bg-transparent pl-[2px] opacity-100 outline-none">
            <option>Debug</option>
          </select>
          <Caret className="fill-[#8087a0]" />
        </span>
        <ToolItems
          size="h-[22px] w-[22px]"
          sep="w-[12px]"
          items={['|', 'folderFind', 'properties', 'toolboxWin', 'winFind', 'diamondWin', 'tools', 'blocks', 'clipError', 'errorWin']}
        />
      </div>
      <Overflow className="w-[11px] bg-[#dce2ec] text-[#1b293e]" />
      <div className="ml-[2px] flex items-center bg-[#bcc7d8]">
        <Grip />
        <ToolItems
          size="h-[22px] w-[22px]"
          sep="w-[8px]"
          items={['arrowRight', 'errorWin', 'editWin', 'findWin', 'cascade', '|', 'wave', '|', 'breakpoint', 'v']}
        />
      </div>
      <Overflow className="w-[11px] bg-[#dce2ec] text-[#1b293e]" />
      <div className="ml-[2px] flex items-center bg-[#bcc7d8] pr-[3px]">
        <Grip />
      </div>
      <Overflow className="w-[11px] bg-[#dce2ec] text-[#1b293e]" />
    </div>

    <div className="flex min-h-0 flex-1 gap-[6px] bg-[#2b3b5b] px-[5px] pt-[6px]">
      <aside className="flex w-[198px] shrink-0 flex-col bg-[#bcc7d8]">
        <PanelHeader title="Object Browser" />
        <div className="flex h-[25px] justify-end">
          <span className="w-[9px] bg-[#d0d7e3] text-center leading-[12px] font-bold">"</span>
        </div>
        <div className="flex items-center gap-[7px] pt-[4px] pl-[7px]">
          <label className="flex h-5 w-[140px] items-center border border-[#8a97b0] bg-white pr-[3px]">
            <input aria-label="Search" defaultValue="<Search>" className="min-w-0 flex-1 bg-transparent pl-[3px] outline-none" />
            <Caret />
          </label>
          <Icon name="go" />
          <Icon name="listGray" />
        </div>
      </aside>

      <main className="flex min-w-0 flex-1 flex-col bg-white">
        <div className="flex h-5 shrink-0 items-stretch bg-[#2b3b5b] text-white">
          <button type="button" className="w-[86px] pl-1 text-left">Site.master</button>
          <button type="button" className="flex w-[107px] items-center justify-between bg-gradient-to-b from-[#fffcf0] to-[#ffe8a6] px-[3px] text-black">
            Default.aspx.vb
            <svg viewBox="0 0 9 9" className="mr-[3px] h-[9px] w-[9px]" fill="none" stroke="#6b5f3a" strokeWidth="1.4" aria-hidden="true">
              <path d="M.5.5l8 8 M8.5.5l-8 8" />
            </svg>
          </button>
          <button type="button" className="w-[86px] pl-1 text-left">Web.config</button>
          <button type="button" className="w-[87px] pl-1 text-left">About.aspx</button>
          <button type="button" className="w-[87px] pl-1 text-left">Default.aspx</button>
          <svg viewBox="0 0 8 4" className="mt-[10px] mr-[6px] ml-auto h-1 w-2 fill-[#d5dbe8]" aria-hidden="true">
            <path d="M0 0h8L4 4z" />
          </svg>
        </div>
        <div className="h-[5px] shrink-0 bg-[#ffe8a6]" />
        <div className="flex h-[22px] shrink-0 border-b-2 border-[#2b3b5b]">
          <MemberSelect icon="classes" value="_Default" />
          <MemberSelect icon="method" value="Import_To_Grid" />
        </div>
        <div className="flex min-h-0 flex-1 overflow-hidden font-['Liberation_Mono',monospace] text-[13px] leading-4">
          <div className="w-4 shrink-0 bg-[#e6e7e8]" />
          <pre className="-mt-2 w-[48px] shrink-0 border-r-[5px] border-[#6ce26c] pr-2 text-right font-[inherit] text-[#2b91af]">{'30\n31'}</pre>
          <div className="ml-[18px] w-px shrink-0 bg-[#a5a5a5]" />
          <pre className="-mt-2 ml-[69px] flex-1 font-[inherit]">
            <span className="text-[#0000ff]">Dim</span> dt <span className="text-[#0000ff]">As New</span> Data.
            <span className="text-[#2b91af]">DataTable</span>()
            {'\n'}cmdExcel.Connection = <span className="bg-[#e2e2dc]">connExcel</span>
          </pre>
          <div className="w-4 shrink-0 bg-[#d5dbe6] pt-px">
            <svg viewBox="0 0 16 16" className="h-3 w-4" fill="none" stroke="#111" strokeWidth="1.6" aria-hidden="true">
              <path d="M2 7.5h12 M2 10.5h12 M8 7V1 M8 11v5 M5.5 3.5L8 1l2.5 2.5" />
            </svg>
          </div>
        </div>
      </main>

      <aside className="flex w-[148px] shrink-0 flex-col bg-white">
        <PanelHeader title="Solution Explorer" />
        <div className="flex h-[26px] shrink-0 items-center bg-[#bcc7d8] pl-1">
          <ToolItems size="h-[22px] w-[22px]" sep="w-[6px]" items={['folders', '|', 'refresh']} />
          <button type="button" aria-label="Nest files" className="flex h-[22px] w-[22px] items-center justify-center border border-[#e5c365] bg-[#fff0c0]">
            <Icon name="nest" />
          </button>
          <ToolItems size="h-[22px] w-[22px]" sep="w-[6px]" items={['|', 'form', '|']} />
          <span className="ml-auto h-full w-[10px] bg-[#d0d7e3] text-center leading-[12px] font-bold">"</span>
        </div>
        <div className="flex items-center gap-1 pt-px pl-3 font-bold">
          <Icon name="siteGlobe" />
          G:\...\PostTracker\
        </div>
      </aside>
    </div>
  </section>
);

/* ---------- DataSet Visualizer ---------- */

const Visualizer = () => (
  <section className="absolute top-[493px] right-1 bottom-0 left-[63px] flex flex-col border border-[#404040] border-t-[#d4d0c8] border-l-[#d4d0c8] bg-[#d4d0c8] p-[3px] shadow-[inset_1px_1px_0_#ffffff,inset_-1px_-1px_0_#808080]">
    <header className="flex h-[18px] shrink-0 items-center justify-between bg-gradient-to-r from-[#0a246a] to-[#a6caf0] pr-px pl-[2px]">
      <h2 className="font-bold text-white">DataSet Visualizer</h2>
      <div className="flex">
        <CaptionButton label="Minimize" />
        <CaptionButton label="Maximize" />
        <span className="w-[2px]" />
        <CaptionButton label="Close" />
      </div>
    </header>

    <div className="flex items-start pt-[13px] pl-[14px]">
      <label htmlFor="table" className="w-[40px] leading-[18px]">Table:</label>
      <span className="flex h-[21px] w-[267px] items-center border-2 border-[#404040] border-r-[#e8e6e2] border-b-[#f8fafa] bg-[#f8fafa]">
        <select id="table" className="h-full min-w-0 flex-1 appearance-none bg-transparent outline-none" />
        <span className={`flex h-full w-4 items-center justify-center ${raised}`}>
          <Triangle dir="down" />
        </span>
      </span>
    </div>

    <div className="mt-[7px] mr-[9px] mb-[5px] ml-3 flex min-h-0 flex-1 flex-col border border-black bg-[#f8fafa]">
      <div className="flex min-h-0 flex-1">
        <div className="min-w-0 flex-1 overflow-hidden">
          <table className="w-[1523px] table-fixed border-separate border-spacing-0 leading-[21px]">
            <thead>
              <tr className="h-6 bg-[#d4d0c8] text-left">
                <th className="w-[23px] border-r border-b border-[#808080] p-0" />
                {gridColumns.map((name) => (
                  <th key={name} scope="col" className="w-[100px] border-r border-b border-[#808080] p-0 pt-[2px] pl-[5px] font-normal">
                    {name}
                  </th>
                ))}
              </tr>
            </thead>
            <tbody>
              {gridRows.map((row, r) => (
                <tr key={row[0]} className="h-[22px]">
                  <td className="border-r border-b border-[#808080] bg-[#d4d0c8] p-0 pl-1 shadow-[inset_0_1px_0_#ffffff]">
                    {r === 0 && (
                      <svg viewBox="0 0 6 10" className="ml-px h-[10px] w-[6px] fill-[#404040]" aria-hidden="true">
                        <path d="M0 0l6 5l-6 5z" />
                      </svg>
                    )}
                  </td>
                  {gridColumns.map((name, c) => (
                    <td
                      key={name}
                      className={`overflow-hidden border-r border-b border-[#808080] p-0 pl-[2px] whitespace-nowrap ${r === 0 && c === 0 ? 'bg-[#0a246a] text-white' : ''}`}
                    >
                      {row[c]}
                    </td>
                  ))}
                </tr>
              ))}
            </tbody>
          </table>
        </div>
        <div className={`flex w-4 shrink-0 flex-col ${track}`}>
          <ScrollButton dir="up" />
          <div className={`h-4 shrink-0 ${raised}`} />
          <div className="flex-1" />
          <ScrollButton dir="down" />
        </div>
      </div>
      <div className="flex h-4 shrink-0 bg-[#d4d0c8]">
        <ScrollButton dir="left" />
        <div className={`flex flex-1 ${track}`}>
          <div className={`w-[91%] ${raised}`} />
        </div>
        <ScrollButton dir="right" />
        <div className="w-4" />
      </div>
    </div>
  </section>
);

export default function App() {
  return (
    <div className="relative min-h-screen overflow-hidden font-['DejaVu_Sans_Condensed','DejaVu_Sans',sans-serif] text-[11px] leading-[14px] text-black">
      <Excel />
      <VisualStudio />
      <Visualizer />
    </div>
  );
}
